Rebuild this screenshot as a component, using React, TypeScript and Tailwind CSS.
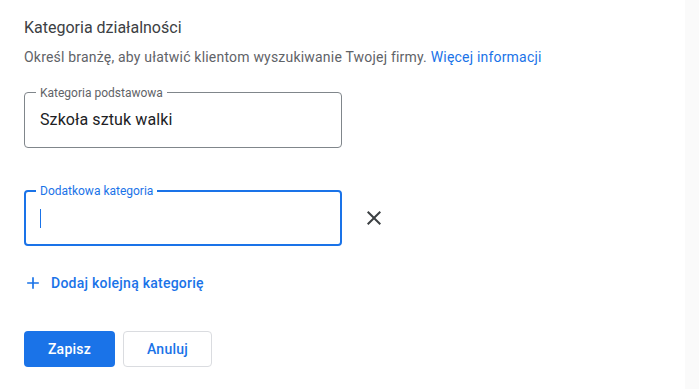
import React from "react";

const font = { fontFamily: "Roboto, 'Noto Sans', Arial, sans-serif" };

function CloseIcon() {
  return (
    <svg width="24" height="24" viewBox="0 0 24 24" className="fill-[#3c4043]">
      <path d="M19 6.41L17.59 5 12 10.59 6.41 5 5 6.41 10.59 12 5 17.59 6.41 19 12 13.41 17.59 19 19 17.59 13.41 12z" />
    </svg>
  );
}

function AddIcon() {
  return (
    <svg width="20" height="20" viewBox="0 0 24 24" className="fill-[#1a73e8]">
      <path d="M19 13h-6v6h-2v-6H5v-2h6V5h2v6h6v2z" />
    </svg>
  );
}

export default function App() {
  return (
    <div className="flex w-[699px] h-[389px] bg-white overflow-hidden" style={font}>
      <div className="flex-1 flex flex-col pl-6 pt-4">
        <h2 className="text-[16px] leading-6 font-normal text-[#3c4043]">Kategoria działalności</h2>
        <p className="mt-[7px] text-[14px] leading-5 tracking-[0.2px] text-[#5f6368]">
          Określ branżę, aby ułatwić klientom wyszukiwanie Twojej firmy.{" "}
          <a className="text-[#1a73e8]">Więcej informacji</a>
        </p>

        <div className="mt-[25px] relative w-[318px] h-[56px] border border-[#80868b] rounded-[4px] flex items-center px-[15px]">
          <span className="absolute -top-2 left-[11px] px-1 bg-white text-[12px] leading-4 text-[#5f6368]">
            Kategoria podstawowa
          </span>
          <span className="text-[16px] leading-6 tracking-[0.1px] text-[#202124]">Szkoła sztuk walki</span>
        </div>

        <div className="mt-[42px] flex items-center">
          <div className="relative w-[318px] h-[56px] border-2 border-[#1a73e8] rounded-[4px] flex items-center px-[14px]">
            <span className="absolute -top-[9px] left-[10px] px-1 bg-white text-[12px] leading-4 text-[#1a73e8]">
              Dodatkowa kategoria
            </span>
            <span className="block w-px h-[19px] bg-[#1a73e8]" />
          </div>
          <div className="ml-5">
            <CloseIcon />
          </div>
        </div>

        <div className="mt-[27px] flex items-center -ml-px">
          <AddIcon />
          <span className="ml-2 text-[14px] leading-5 font-medium tracking-[0.25px] text-[#1a73e8]">Dodaj kolejną kategorię</span>
        </div>

        <div className="mt-[38px] flex gap-2">
          <button className="w-[91px] h-9 rounded-[4px] bg-[#1a73e8] text-white text-[14px] font-medium tracking-[0.25px]">Zapisz</button>
          <button className="w-[89px] h-9 rounded-[4px] border border-[#dadce0] bg-white text-[#1a73e8] text-[14px] font-medium tracking-[0.25px]">Anuluj</button>
        </div>
      </div>
      <div className="w-[14px] bg-[#fafafa]" />
    </div>
  );
}
